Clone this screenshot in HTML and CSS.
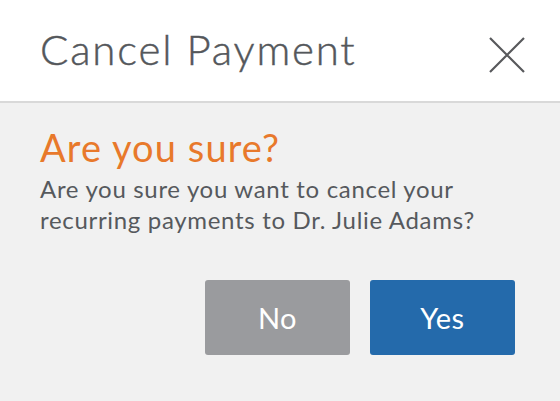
FILE: index.html
```html
<!DOCTYPE html>
<html lang="en">
<head>
<meta charset="utf-8">
<title>Cancel Payment</title>
<link rel="stylesheet" href="styles.css">
</head>
<body>
<div class="dialog">
  <header class="dialog-header">
    <h1 class="dialog-title">Cancel Payment</h1>
    <button class="close-btn" aria-label="Close">
      <svg width="36" height="36" viewBox="0 0 36 36" aria-hidden="true">
        <path d="M1 1 L35 35 M35 1 L1 35" stroke="#58595c" stroke-width="2.2" fill="none"/>
      </svg>
    </button>
  </header>
  <main class="dialog-body">
    <h2 class="question">Are you sure?</h2>
    <p class="message">Are you sure you want to cancel your<br>recurring payments to Dr. Julie Adams?</p>
    <div class="actions">
      <button class="btn btn-no">No</button>
      <button class="btn btn-yes">Yes</button>
    </div>
  </main>
</div>
</body>
</html>
```
FILE: styles.css
```css
* { box-sizing: border-box; }
html, body { margin: 0; padding: 0; }
body {
  width: 560px;
  height: 401px;
  background: #f1f1f1;
  font-family: Lato, "Liberation Sans", sans-serif;
  overflow: hidden;
}
.dialog {
  width: 560px;
  height: 401px;
  display: flex;
  flex-direction: column;
  background: #f1f1f1;
  border-bottom-right-radius: 4px;
}
.dialog-header {
  height: 103px;
  flex: none;
  display: flex;
  align-items: flex-start;
  justify-content: space-between;
  padding: 0 35px 0 40px;
  background: #ffffff;
  border-bottom: 2px solid #d9d9d9;
}
.dialog-title {
  margin: 28px 0 0;
  font-size: 42px;
  font-weight: 300;
  color: #54575b;
  letter-spacing: 1.8px;
  line-height: 42px;
  -webkit-text-stroke: 0.45px #54575b;
}
.close-btn {
  background: none;
  border: 0;
  padding: 0;
  margin-top: 37px;
  width: 36px;
  height: 36px;
  display: flex;
}
.dialog-body {
  padding: 22px 45px 0 40px;
  display: flex;
  flex-direction: column;
}
.question {
  margin: 0;
  font-size: 38px;
  font-weight: 400;
  color: #e8792b;
  line-height: 44px;
  letter-spacing: 1.1px;
}
.message {
  margin: 4px 0 0;
  font-size: 24px;
  line-height: 31px;
  color: #56595d;
  letter-spacing: 0.68px;
}
.actions {
  display: flex;
  justify-content: flex-end;
  gap: 20px;
  margin-top: 45px;
}
.btn {
  width: 145px;
  height: 75px;
  border: 0;
  border-radius: 3px;
  font-family: Lato, "Liberation Sans", sans-serif;
  font-size: 29px;
  font-weight: 400;
  color: #ffffff;
  padding: 0;
  letter-spacing: 0.5px;
}
.btn-no { background: #9a9b9e; }
.btn-yes { background: #246aab; }
```
